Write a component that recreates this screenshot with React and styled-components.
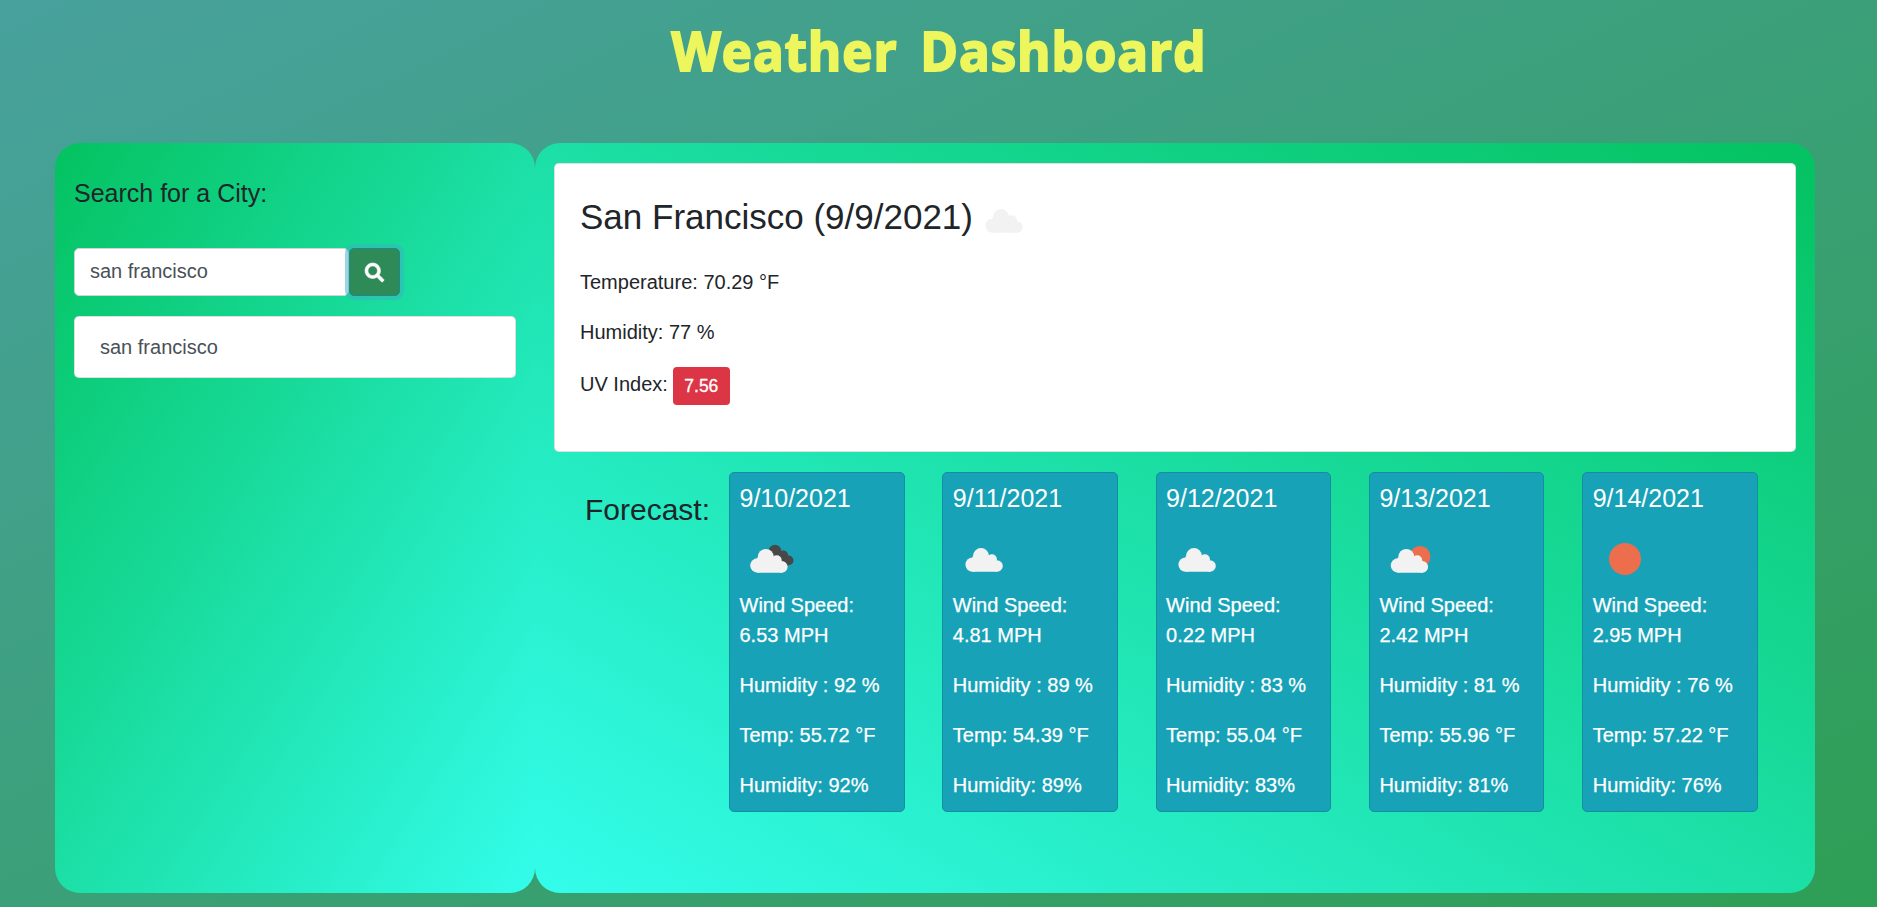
import React from "react";
import styled, { createGlobalStyle } from "styled-components";
import { FaSearch } from "react-icons/fa";

const GlobalStyle = createGlobalStyle`
  *, *::before, *::after { box-sizing: border-box; }
  html { height: 100%; }
  body {
    margin: 0;
    height: 907px;
    overflow: hidden;
    font-family: "Liberation Sans", Arial, sans-serif;
    font-size: 20px;
    line-height: 30px;
    color: #212529;
    background: linear-gradient(to right bottom, #48a19d, #2e9f55) no-repeat;
  }
  h1, h2, h3, h4, p, ul { margin: 0; padding: 0; font-weight: 400; }
`;

const Header = styled.header`
  height: 143px;
  padding-top: 12px;
  display: flex;
  justify-content: center;
`;

const Brand = styled.h1`
  && { font-weight: 700; }
  font-family: "Open Sans", "Noto Sans", sans-serif;
  font-size: 54px;
  line-height: 76px;
  letter-spacing: 1px;
  word-spacing: 9px;
  white-space: nowrap;
  color: #edf65c;
  -webkit-text-stroke: 2px #edf65c;
  transform: scaleX(0.945);
`;

const Columns = styled.main`
  display: flex;
  width: 1760px;
  height: 750px;
  margin-left: 55px;
`;

const Panel = styled.section`
  width: ${(p) => p.$width}px;
  padding: 20px 19px;
  border-radius: 25px;
  background: linear-gradient(to ${(p) => p.$toward} bottom, #04c260, #33fdeb);
`;

const SearchLabel = styled.h3`
  margin-top: 15px;
  font-size: 25px;
  line-height: 30px;
`;

const SearchForm = styled.form`
  display: flex;
  margin-top: 40px;
`;

const SearchInput = styled.input`
  width: 275px;
  height: 48px;
  padding: 0 15px 2px;
  border: 1px solid #ced4da;
  border-radius: 5px;
  font: inherit;
  color: #495057;
  outline: none;
`;

const SearchButton = styled.button`
  display: flex;
  align-items: center;
  justify-content: center;
  width: 51px;
  height: 48px;
  padding: 0;
  border: 1px solid #1f8a80;
  border-radius: 5px;
  color: #fff;
  background: #2e8b57;
  box-shadow: 0 0 0 4px rgba(58, 176, 195, 0.5);
  font-size: 19px;

  svg {
    stroke: currentColor;
    stroke-width: 16px;
    overflow: visible;
  }
`;

const History = styled.ul`
  margin-top: 20px;
  list-style: none;
`;

const HistoryItem = styled.li`
  height: 62px;
  padding: 15px 25px;
  border: 1px solid rgba(0, 0, 0, 0.125);
  border-radius: 5px;
  background: #fff;
  color: #495057;
`;

const CurrentCard = styled.article`
  height: 289px;
  padding: 25px 25px;
  border: 1px solid rgba(0, 0, 0, 0.125);
  border-radius: 5px;
  background: #fff;
`;

const CityTitle = styled.h2`
  display: flex;
  height: 63px;
  font-size: 35px;
  line-height: 56px;
`;

const Reading = styled.p`
  height: 30px;
  margin-top: ${(p) => p.$gap}px;
`;

const UvRow = styled(Reading)`
  display: flex;
  gap: 5px;
`;

const UvBadge = styled.span`
  width: 57px;
  height: 38px;
  margin-top: -2px;
  border-radius: 4px;
  background: #dc3545;
  color: #fff;
  font-size: 17.5px;
  line-height: 38px;
  text-align: center;
  -webkit-text-stroke: 0.3px #fff;
`;

const ForecastRow = styled.div`
  display: flex;
  margin-top: 20px;
  padding-left: 31px;
`;

const ForecastTitle = styled.h3`
  width: 144px;
  padding-top: 20px;
  font-size: 30px;
  line-height: 36px;
`;

const Days = styled.div`
  display: flex;
  gap: 37.8px;
`;

const DayCard = styled.article`
  width: 175.5px;
  height: 340px;
  padding: 10px 9.5px;
  border: 1px solid #148ea1;
  border-radius: 5px;
  background: #17a2b8;
  color: #fff;
`;

const DayDate = styled.h4`
  margin-bottom: 15px;
  font-size: 25px;
  line-height: 30px;
`;

const DayLine = styled.p`
  -webkit-text-stroke: 0.25px #fff;
  & + & { margin-top: 20px; }
`;

const Glyph = styled.svg`
  display: block;
  width: 62px;
  height: 62px;
`;

const Cloud = ({ color = "#f2f2f2" }) => (
  <g fill={color}>
    <circle cx="19.2" cy="36" r="7.2" />
    <circle cx="27.6" cy="27.5" r="8" />
    <circle cx="38.5" cy="30.7" r="5" />
    <circle cx="43.6" cy="37.4" r="5.8" />
    <path d="M19 28h20l5 8v7.2H19.2z" />
  </g>
);

function WeatherIcon({ kind }) {
  return (
    <Glyph viewBox="0 0 62 62" aria-hidden="true">
      {kind === "cloud" && (
        <g transform="translate(0.4 0.6)"><Cloud /></g>
      )}
      {kind === "broken" && (
        <>
          <g fill="#484848">
            <circle cx="35" cy="23" r="6.2" />
            <circle cx="43.2" cy="27.6" r="5" />
            <circle cx="48.6" cy="32.4" r="4.9" />
            <path d="M36 22l8 5 5 5v5.3H34z" />
          </g>
          <g transform="translate(-1.8 1.5)"><Cloud /></g>
        </>
      )}
      {kind === "partly" && (
        <>
          <circle cx="41" cy="28.5" r="10.5" fill="#ec6e4c" />
          <g transform="translate(-0.3 1.5)"><Cloud /></g>
        </>
      )}
      {kind === "sun" && <circle cx="32" cy="31" r="16" fill="#ec6e4c" />}
    </Glyph>
  );
}

const days = [
  { date: "9/10/2021", kind: "broken", wind: "6.53", humidity: 92, temp: "55.72" },
  { date: "9/11/2021", kind: "cloud", wind: "4.81", humidity: 89, temp: "54.39" },
  { date: "9/12/2021", kind: "cloud", wind: "0.22", humidity: 83, temp: "55.04" },
  { date: "9/13/2021", kind: "partly", wind: "2.42", humidity: 81, temp: "55.96" },
  { date: "9/14/2021", kind: "sun", wind: "2.95", humidity: 76, temp: "57.22" },
];

export default function App() {
  return (
    <>
      <GlobalStyle />
      <Header>
        <Brand>Weather Dashboard</Brand>
      </Header>
      <Columns>
        <Panel $width={480} $toward="right">
          <SearchLabel>Search for a City:</SearchLabel>
          <SearchForm onSubmit={(e) => e.preventDefault()}>
            <SearchInput defaultValue="san francisco" />
            <SearchButton aria-label="Search">
              <FaSearch />
            </SearchButton>
          </SearchForm>
          <History>
            <HistoryItem>san francisco</HistoryItem>
          </History>
        </Panel>
        <Panel $width={1280} $toward="left">
          <CurrentCard>
            <CityTitle>
              San Francisco (9/9/2021)
              <WeatherIcon kind="cloud" />
            </CityTitle>
            <Reading $gap={15}>Temperature: 70.29 °F</Reading>
            <Reading $gap={20}>Humidity: 77 %</Reading>
            <UvRow $gap={22}>
              UV Index: <UvBadge>7.56</UvBadge>
            </UvRow>
          </CurrentCard>
          <ForecastRow>
            <ForecastTitle>Forecast:</ForecastTitle>
            <Days>
              {days.map((d) => (
                <DayCard key={d.date}>
                  <DayDate>{d.date}</DayDate>
                  <WeatherIcon kind={d.kind} />
                  <DayLine>
                    Wind Speed:
                    <br />
                    {d.wind} MPH
                  </DayLine>
                  <DayLine>Humidity : {d.humidity} %</DayLine>
                  <DayLine>Temp: {d.temp} °F</DayLine>
                  <DayLine>Humidity: {d.humidity}%</DayLine>
                </DayCard>
              ))}
            </Days>
          </ForecastRow>
        </Panel>
      </Columns>
    </>
  );
}
